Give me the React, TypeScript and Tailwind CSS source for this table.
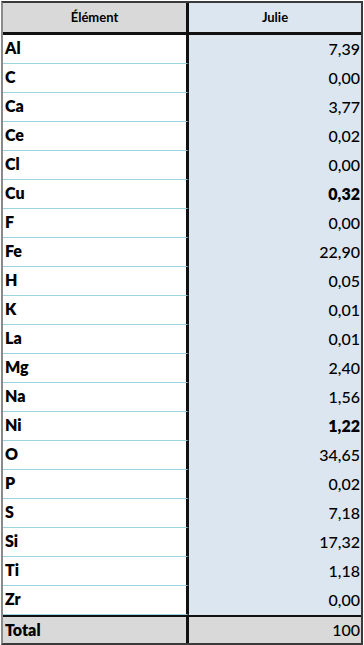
const rows: { el: string; val: string; bold?: boolean }[] = [
  { el: "Al", val: "7,39" },
  { el: "C", val: "0,00" },
  { el: "Ca", val: "3,77" },
  { el: "Ce", val: "0,02" },
  { el: "Cl", val: "0,00" },
  { el: "Cu", val: "0,32", bold: true },
  { el: "F", val: "0,00" },
  { el: "Fe", val: "22,90" },
  { el: "H", val: "0,05" },
  { el: "K", val: "0,01" },
  { el: "La", val: "0,01" },
  { el: "Mg", val: "2,40" },
  { el: "Na", val: "1,56" },
  { el: "Ni", val: "1,22", bold: true },
  { el: "O", val: "34,65" },
  { el: "P", val: "0,02" },
  { el: "S", val: "7,18" },
  { el: "Si", val: "17,32" },
  { el: "Ti", val: "1,18" },
  { el: "Zr", val: "0,00" },
];

const App = () => {
  return (
    <div className="w-[364px] h-[645px] bg-white pt-px pl-px" style={{ fontFamily: "Lato, 'Open Sans', sans-serif" }}>
      <div className="w-[362px] border-2 border-[#3a3a3a] border-l-[#8a8a8a] text-black">
        {/* header */}
        <div className="grid grid-cols-[186px_1fr] h-[32px] border-b-[3px] border-[#111]">
          <div className="bg-[#d9d9d9] border-r-[3px] border-[#111] flex items-center justify-center text-[13px] font-bold">
            Élément
          </div>
          <div className="bg-[#dce6f1] flex items-center justify-center text-[13px] font-bold">Julie</div>
        </div>

        {rows.map((r) => (
          <div key={r.el} className="grid grid-cols-[186px_1fr] h-[29px]">
            <div className="bg-white border-r-[3px] border-[#111] border-b border-b-[#9dd3e0] flex items-center pl-[2px] pb-[3px] text-[16px] font-extrabold">
              {r.el}
            </div>
            <div
              className={
                r.bold
                  ? "bg-[#dce6f1] flex items-center justify-end pr-px pb-[2px] text-[16px] font-extrabold"
                  : "bg-[#dce6f1] flex items-center justify-end pr-px pb-[2px] text-[16px] font-medium"
              }
            >
              {r.val}
            </div>
          </div>
        ))}

        {/* total */}
        <div className="grid grid-cols-[186px_1fr] h-[28px] border-t-2 border-[#111]">
          <div className="bg-[#d9d9d9] border-r-[3px] border-[#111] flex items-center pl-[2px] text-[16px] font-extrabold">
            Total
          </div>
          <div className="bg-[#d9d9d9] flex items-center justify-end pr-px text-[16px] font-medium">100</div>
        </div>
      </div>
    </div>
  );
};

export default App;
